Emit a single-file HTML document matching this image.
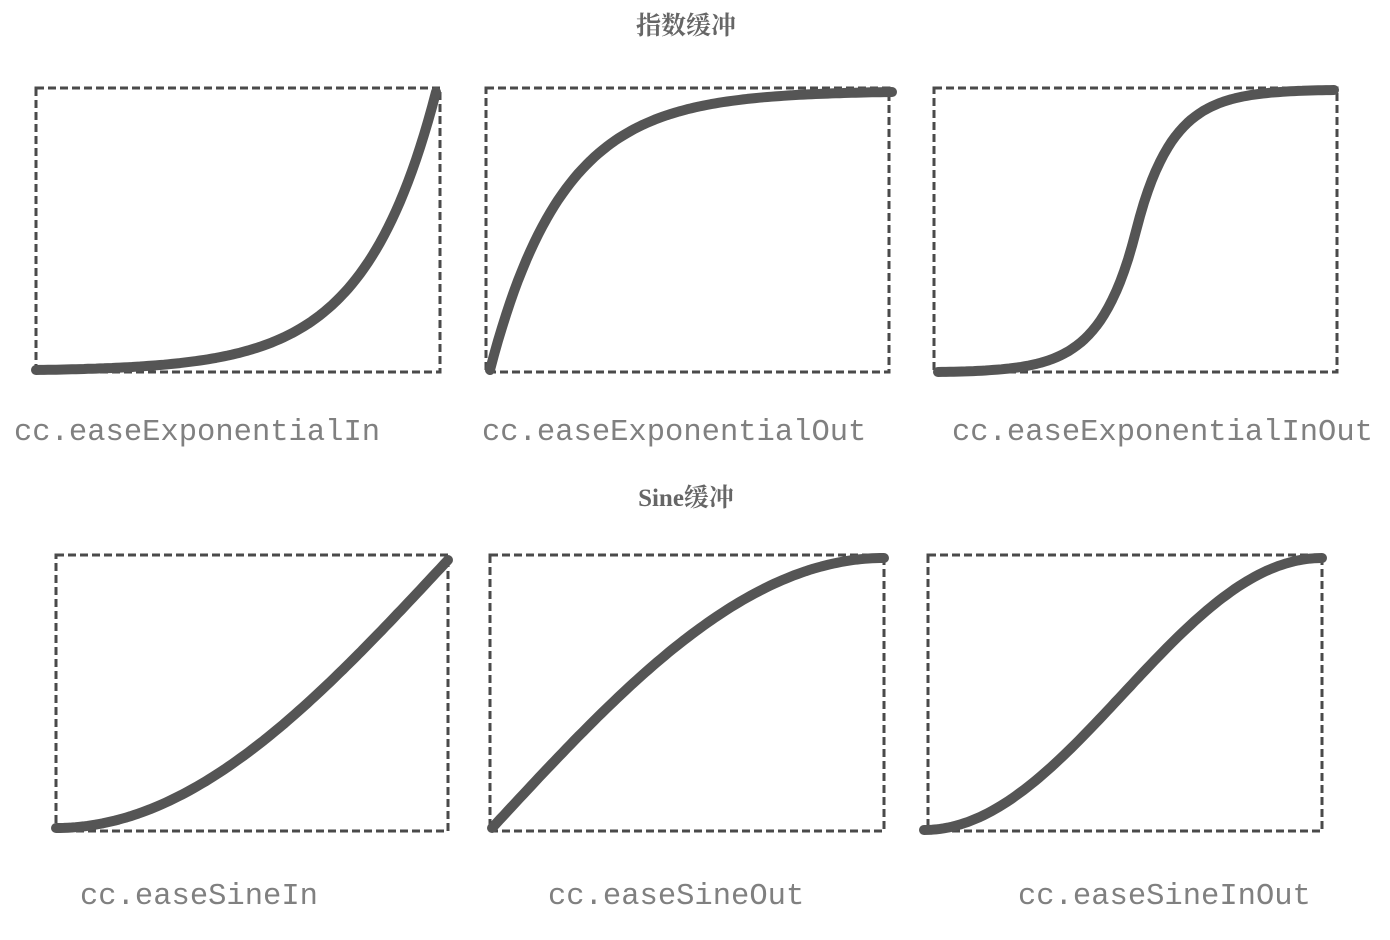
<!DOCTYPE html>
<html><head><meta charset="utf-8"><style>
html,body{margin:0;padding:0;background:#fff;}
svg{display:block}
</style></head><body>
<svg id="s" width="1390" height="940" xmlns="http://www.w3.org/2000/svg">
<g fill="none" stroke="#4a4a4a" stroke-width="3" stroke-dasharray="8,4">
<rect x="36" y="88" width="404" height="284"/>
<rect x="486" y="88" width="403" height="284"/>
<rect x="934" y="88" width="403" height="284"/>
<rect x="56" y="555" width="392" height="276"/>
<rect x="490" y="555" width="394" height="276"/>
<rect x="928" y="555" width="394" height="276"/>
</g>
<g id="curves" fill="none" stroke="#555" stroke-width="10" stroke-linecap="round" stroke-linejoin="round"></g>
<g font-family="'Liberation Mono',monospace" font-size="30.5" fill="#808080">
<text x="14" y="440">cc.easeExponentialIn</text>
<text x="482" y="440">cc.easeExponentialOut</text>
<text x="952" y="440">cc.easeExponentialInOut</text>
<text x="80" y="904">cc.easeSineIn</text>
<text x="548" y="904">cc.easeSineOut</text>
<text x="1018" y="904">cc.easeSineInOut</text>
</g>
<g font-family="'Liberation Serif','Noto Serif CJK SC',serif" font-size="25" font-weight="bold" fill="#666" text-anchor="middle">
<text x="686" y="34">指数缓冲</text>
<text x="686" y="506">Sine缓冲</text>
</g>
</svg>
<script>
var g=document.getElementById('curves');
function add(f,x0,y0,x1,y1){var d='';for(var i=0;i<=100;i++){var t=i/100;var x=x0+(x1-x0)*t,y=y0+(y1-y0)*f(t);d+=(i?'L':'M')+x.toFixed(1)+','+y.toFixed(1);}
var p=document.createElementNS('http://www.w3.org/2000/svg','path');p.setAttribute('d',d);g.appendChild(p);}
var k=8;
var ei=function(t){return (Math.pow(2,k*t)-1)/(Math.pow(2,k)-1);};
var eo=function(t){return 1-ei(1-t);};
var eio=function(t){return t<.5?ei(2*t)/2:1-ei(2-2*t)/2;};
var si=function(t){return 1-Math.cos(t*Math.PI/2);};
var so=function(t){return Math.sin(t*Math.PI/2);};
var sio=function(t){return -(Math.cos(Math.PI*t)-1)/2;};
add(ei,36,370,436,92);
add(eo,490,370,892,92);
add(eio,938,372,1334,90);
add(si,56,828,448,560);
add(so,492,828,884,558);
add(sio,924,830,1322,558);
</script>
</body></html>
